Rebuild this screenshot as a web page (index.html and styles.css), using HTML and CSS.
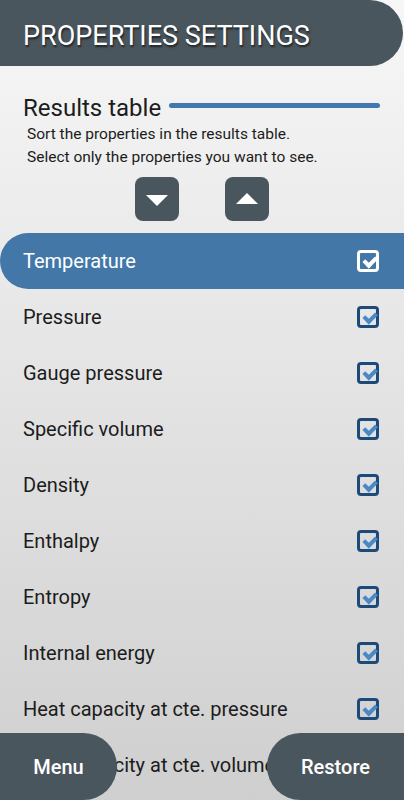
FILE: index.html
```html
<!DOCTYPE html>
<html lang="en">
<head>
  <meta charset="UTF-8">
  <meta name="viewport" content="width=device-width, initial-scale=1.0">
  <title>Properties settings</title>
  <link rel="stylesheet" href="styles.css">
</head>
<body>
  <header class="topbar">PROPERTIES SETTINGS</header>

  <section class="intro">
    <div class="section-title">
      <span>Results table</span>
      <span class="rule"></span>
    </div>
    <p class="hint">Sort the properties in the results table.<br>Select only the properties you want to see.</p>
    <div class="sorters">
      <button class="sort-btn"><span class="tri down"></span></button>
      <button class="sort-btn"><span class="tri up"></span></button>
    </div>
  </section>

  <ul class="props">
    <li class="active">Temperature<span class="check"></span></li>
    <li>Pressure<span class="check"></span></li>
    <li>Gauge pressure<span class="check"></span></li>
    <li>Specific volume<span class="check"></span></li>
    <li>Density<span class="check"></span></li>
    <li>Enthalpy<span class="check"></span></li>
    <li>Entropy<span class="check"></span></li>
    <li>Internal energy<span class="check"></span></li>
    <li>Heat capacity at cte. pressure<span class="check"></span></li>
    <li>Heat capacity at cte. volume<span class="check"></span></li>
  </ul>

  <footer class="bottom">
    <button class="pill left">Menu</button>
    <button class="pill right">Restore</button>
  </footer>
</body>
</html>
```

FILE: styles.css
```css
html, body {
  margin: 0;
  height: 800px;
  overflow: hidden;
}
body {
  font-family: Roboto, "Noto Sans", sans-serif;
  background: linear-gradient(#f7f7f7, #cfcfcf);
  color: #1c1c1c;
  position: relative;
}
.topbar {
  height: 66px;
  width: 403px;
  box-sizing: border-box;
  background: #4a565d;
  border-radius: 0 33px 33px 0;
  color: #fff;
  font-size: 27px;
  padding: 20px 0 0 23px;
  text-shadow: 1px 2px 2px rgba(0,0,0,0.6);
}
.intro {
  padding: 28px 0 0 23px;
}
.section-title {
  display: flex;
  align-items: center;
  font-size: 24px;
  gap: 8px;
}
.rule {
  flex: none;
  width: 211px;
  height: 5px;
  margin-top: -6px;
  border-radius: 3px;
  background: #4278ad;
}
.hint {
  margin: 1px 0 0 4px;
  font-size: 15.5px;
  line-height: 23px;
}
.sorters {
  display: flex;
  gap: 46px;
  padding: 8px 0 0 112px;
}
.sort-btn {
  width: 44px;
  height: 44px;
  border: none;
  border-radius: 8px;
  background: #4a565d;
  display: flex;
  align-items: center;
  justify-content: center;
  padding: 0;
}
.tri {
  width: 0;
  height: 0;
  border-left: 11px solid transparent;
  border-right: 11px solid transparent;
}
.tri.down { border-top: 11px solid #fff; margin-top: 3px; }
.tri.up { border-bottom: 11px solid #fff; margin-top: -2px; }
.props {
  list-style: none;
  margin: 12px 0 0;
  padding: 0;
}
.props li {
  height: 56px;
  display: flex;
  align-items: center;
  justify-content: space-between;
  padding: 0 25px 0 23px;
  font-size: 20px;
  white-space: nowrap;
}
.props li.active {
  background: #4377a8;
  color: #fff;
  border-radius: 28px 0 0 28px;
}
.check {
  flex: none;
  width: 22px;
  height: 22px;
  box-sizing: border-box;
  border: 3px solid #1d4a78;
  border-radius: 4px;
  position: relative;
}
.check::after {
  content: "";
  position: absolute;
  left: 3px;
  top: 1px;
  width: 9px;
  height: 5px;
  border-left: 4px solid #4a88c6;
  border-bottom: 4px solid #4a88c6;
  transform: rotate(-45deg) translate(-1px, 2px);
}
.active .check { border-color: #fff; }
.active .check::after { border-color: #fff; }
.bottom {
  position: absolute;
  left: 0;
  right: 0;
  bottom: 0;
  height: 67px;
  display: flex;
  justify-content: space-between;
}
.pill {
  border: none;
  background: #4a565d;
  color: #fff;
  font-family: Roboto, sans-serif;
  font-size: 20px;
  font-weight: 500;
  height: 67px;
  padding: 0;
}
.pill.left {
  width: 117px;
  border-radius: 0 34px 34px 0;
}
.pill.right {
  width: 137px;
  border-radius: 34px 0 0 34px;
}
```
